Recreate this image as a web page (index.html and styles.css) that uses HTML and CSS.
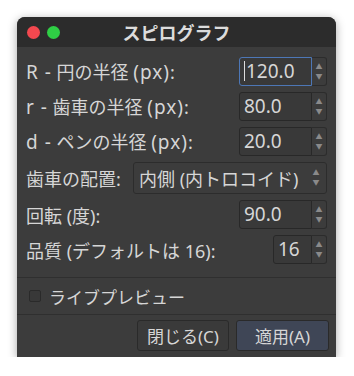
FILE: index.html
```html
<!DOCTYPE html>
<html lang="ja">
<head>
  <meta charset="UTF-8">
  <title>スピログラフ</title>
  <link rel="stylesheet" href="styles.css">
</head>
<body>

  <!-- ダイアログ -->
  <div class="dialog">
    <div class="titlebar">
      <div class="lights">
        <span class="light red"></span>
        <span class="light green"></span>
      </div>
      <div class="title">スピログラフ</div>
    </div>

    <div class="form">
      <div class="row">
        <label><span class="latin">R -</span> 円の半径 <span class="latin">(px)</span>:</label>
        <div class="spin">
          <div class="field focus"><span class="caret"></span>120.0</div>
          <div class="arrows"><span>▲</span><span>▼</span></div>
        </div>
      </div>
      <div class="row">
        <label><span class="latin">r -</span> 歯車の半径 <span class="latin">(px)</span>:</label>
        <div class="spin">
          <div class="field">80.0</div>
          <div class="arrows"><span>▲</span><span>▼</span></div>
        </div>
      </div>
      <div class="row">
        <label><span class="latin">d -</span> ペンの半径 <span class="latin">(px)</span>:</label>
        <div class="spin">
          <div class="field">20.0</div>
          <div class="arrows"><span>▲</span><span>▼</span></div>
        </div>
      </div>
      <div class="row">
        <label>歯車の配置:</label>
        <div class="combo">
          <span>内側 (内トロコイド)</span>
          <div class="arrows"><span>▲</span><span>▼</span></div>
        </div>
      </div>
      <div class="row">
        <label>回転 (度):</label>
        <div class="spin">
          <div class="field">90.0</div>
          <div class="arrows"><span>▲</span><span>▼</span></div>
        </div>
      </div>
      <div class="row">
        <label>品質 (デフォルトは 16):</label>
        <div class="spin">
          <div class="field short">16</div>
          <div class="arrows"><span>▲</span><span>▼</span></div>
        </div>
      </div>
    </div>

    <!-- ライブプレビュー -->
    <div class="preview">
      <span class="check"></span>
      <span>ライブプレビュー</span>
    </div>

    <!-- ボタン -->
    <div class="buttons">
      <button class="btn">閉じる(C)</button>
      <button class="btn primary">適用(A)</button>
    </div>
  </div>

</body>
</html>
```

FILE: styles.css
```css
/* ========== 全体 ========== */
body {
  margin: 0;
  padding: 17px 0 0 17px;
  background: #fff;
  font-family: "Noto Sans", "Noto Sans CJK JP", sans-serif;
  color: #d6d6d6;
}

.dialog {
  width: 319px;
  height: 340px;
  background: #3c3c3c;
  border-radius: 8px 8px 0 0;
  box-shadow: 0 2px 10px rgba(0,0,0,0.35);
  display: flex;
  flex-direction: column;
  overflow: hidden;
}

/* ========== タイトルバー ========== */
.titlebar {
  height: 30px;
  background: #2c2c2c;
  position: relative;
  display: flex;
  align-items: center;
  justify-content: center;
}
.lights {
  position: absolute;
  left: 10px;
  top: 9px;
  display: flex;
  gap: 7px;
}
.light {
  width: 13px;
  height: 13px;
  border-radius: 50%;
}
.red { background: #f3484f; }
.green { background: #2fcf45; }
.title {
  font-weight: bold;
  font-size: 18px;
  color: #dcdcdc;
}

/* ========== フォーム ========== */
.form {
  display: flex;
  flex-direction: column;
  gap: 6px;
  padding: 10px 9px 0 9px;
}
.row {
  display: flex;
  align-items: center;
  justify-content: space-between;
  font-size: 18px;
}
.row label {
  white-space: nowrap;
}
/* 英字部分は少し大きめ */
.latin {
  font-size: 19px;
  letter-spacing: 1px;
}

/* スピンボタン */
.spin {
  display: flex;
  height: 29px;
}
.field {
  width: 73px;
  box-sizing: border-box;
  background: #393939;
  border: 1px solid #282828;
  border-radius: 3px 0 0 3px;
  font-size: 19px;
  line-height: 27px;
  padding-left: 4px;
  position: relative;
}
.field.short { width: 39px; }
.field.focus {
  border-color: #4d77b6;
}
.caret {
  display: inline-block;
  width: 1px;
  height: 20px;
  background: #ddd;
  vertical-align: -3px;
  margin-right: 1px;
}
.arrows {
  width: 15px;
  box-sizing: border-box;
  border: 1px solid #2c2c2c;
  border-left: none;
  border-radius: 0 3px 3px 0;
  display: flex;
  flex-direction: column;
  align-items: center;
  justify-content: center;
  gap: 2px;
  font-size: 7px;
  line-height: 8px;
  color: #8a8a8a;
}

/* コンボボックス */
.combo {
  width: 194px;
  height: 32px;
  box-sizing: border-box;
  border: 1px solid #2c2c2c;
  border-radius: 3px;
  display: flex;
  align-items: center;
  justify-content: space-between;
  padding-left: 5px;
  font-size: 18px;
}
.combo .arrows {
  border: none;
  width: 20px;
}

/* ライブプレビュー */
.preview {
  margin-top: 13px;
  border-top: 1px solid #2f2f2f;
  border-bottom: 1px solid #2f2f2f;
  height: 36px;
  display: flex;
  align-items: center;
  gap: 8px;
  padding-left: 12px;
  font-size: 17px;
}
.check {
  width: 10px;
  height: 10px;
  border: 1px solid #2a2a2a;
  background: #383838;
  border-radius: 2px;
}

/* ボタン */
.buttons {
  display: flex;
  justify-content: flex-end;
  gap: 7px;
  padding: 5px 7px 0 0;
}
.btn {
  height: 31px;
  width: 92px;
  padding: 0;
  background: #3a3a3a;
  border: 1px solid #2a2a2a;
  border-radius: 3px;
  color: #d6d6d6;
  font-family: inherit;
  font-size: 17px;
}
.btn.primary {
  width: 93px;
  background: #3f4656;
}
```
